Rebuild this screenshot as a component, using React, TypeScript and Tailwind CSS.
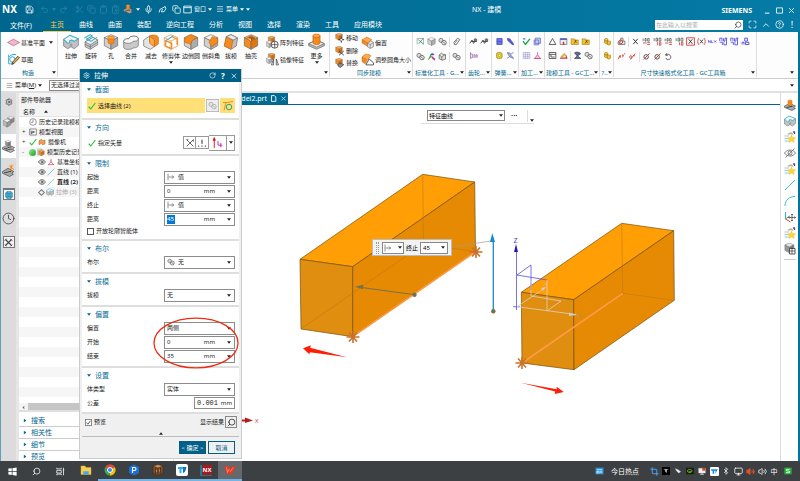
import type { ReactNode } from 'react';
import {
  Bluetooth,
  ChevronUp,
  CircleHelp,
  Clipboard,
  ClipboardCopy,
  Clock,
  Copy,
  Crop,
  Eye,
  Globe,
  Maximize,
  Menu,
  Mic,
  Monitor,
  Redo2,
  RotateCcw,
  Save,
  Scissors,
  Search,
  Settings,
  Undo2,
  Volume2,
  X,
} from 'lucide-react';

/* ---------- small shared pieces ---------- */

function Svg({ children, className = 'size-4', box = '0 0 24 24' }: { children: ReactNode; className?: string; box?: string }) {
  return (
    <svg viewBox={box} className={`${className} shrink-0`} fill="none" stroke="#6a6a6a" strokeWidth="1" strokeLinejoin="round">
      {children}
    </svg>
  );
}

function Caret({ className = 'text-[#222]' }: { className?: string }) {
  return (
    <svg viewBox="0 0 6 4" className={`w-1 h-[3px] shrink-0 ${className}`}>
      <path d="M0 0h6L3 4z" fill="currentColor" />
    </svg>
  );
}

function Cube({ x = 0, y = 0, s = 1, top = '#f4f4f4', left = '#d0d0d0', right = '#acacac' }) {
  return (
    <g transform={`translate(${x} ${y}) scale(${s})`}>
      <path d="M12 1l10 4.500-10 5-10-5z" fill={top} />
      <path d="M2 5.500l10 5V23L2 17.500z" fill={left} />
      <path d="M22 5.500l-10 5V23l10-5.500z" fill={right} />
    </g>
  );
}

const OG = { top: '#ffa94a', left: '#f58a1f', right: '#d96c0a' };

/* ---------- feature icons ---------- */

const FEATURE: Record<string, ReactNode> = {
  extrude: (
    <>
      <path d="M1 8v10l6 4 4-2v-4l2-1v5l4 2 6-5V7l-6 4-4-2-2 1-4 2z" fill="#c2c2c2" />
      <path d="M1 8l9-6 13 5-6 4-4-2-3 1v3l-3 1z" fill="#f3f3f3" stroke="#35b0d3" strokeWidth="1.600" />
    </>
  ),
  revolve: (
    <>
      <path d="M3 12l12-7 7 4v7l-11 7-8-4z" fill="#c8c8c8" />
      <path d="M3 12l8 4 11-7-7-4z" fill="#f1f1f1" />
      <path d="M11 16v7M3 15.500l8 4 11-7" />
      <path d="M2 6l9-5 3 2-9 5 7 3 9-6" stroke="#35b0d3" strokeWidth="1.600" />
    </>
  ),
  hole: (
    <>
      <Cube />
      <path d="M7.500 6v7c1 2.500 8 2.500 9 0V6z" fill="#f58a1f" stroke="#d96c0a" />
      <ellipse cx="12" cy="5.500" rx="5" ry="2.400" fill="#ffa94a" stroke="#d96c0a" />
    </>
  ),
  unite: (
    <>
      <path d="M1 11c0-3 4-4 8-4 0-5 14-5 14 0v10c0 3-5 4-8 4-2 3-14 3-14-1z" fill="#c9c9c9" />
      <path d="M1 11c0-3 4-4 8-4 0-5 14-5 14 0 0 3-4 4-8 4-1 4-14 4-14 0z" fill="#f7f7f7" />
    </>
  ),
  subtract: (
    <>
      <path d="M1 9l9-6v9l7 4v3l-6 4-10-5z" fill="#e4e4e4" />
      <path d="M10 3c4-3 13-1 13 2v10l-6 4V9z" fill="#f58a1f" stroke="#c9650b" />
      <path d="M10 3l7 6v10l-7-5z" fill="#ffa94a" stroke="#c9650b" />
    </>
  ),
  trim: (
    <>
      <path d="M12 1l10 4.500V18L12 23 2 18V5.500zM2 5.500l10 5 10-5M12 10.500V23" stroke="#e08a3a" />
      <path d="M4 10l9 4v8l-9-4zM14 4l7 4v8" stroke="#f58a1f" strokeWidth="1.800" />
      <path d="M4 10l11-7" stroke="#35b0d3" strokeWidth="1.600" />
    </>
  ),
  blend: (
    <>
      <Cube />
      <path d="M2 12c0-4 1-6 5-9l5-2 10 4.500c-6 1-10 5-10 10z" fill="#f58a1f" stroke="#c9650b" />
    </>
  ),
  chamfer: (
    <>
      <Cube />
      <path d="M14 4l8 3v6l-9 6-4-7z" fill="#f58a1f" stroke="#c9650b" />
    </>
  ),
  draft: (
    <>
      <path d="M5 4l7-3 10 5-2 12-8 5-10-5z" fill="#bdbdbd" />
      <path d="M5 4l10 5-3 14-10-5z" fill="#f58a1f" stroke="#c9650b" />
      <path d="M5 4l7-3 10 5-7 3z" fill="#ececec" />
    </>
  ),
  shell: (
    <>
      <Cube left="#f58a1f" right="#e0760f" top="#ffb35c" />
      <path d="M12 3l6 3-6 5-6-5z" fill="#a85a14" stroke="#c9650b" />
      <path d="M6 6l6 5V7z" fill="#ffc078" stroke="none" />
    </>
  ),
  pattern: (
    <>
      <Cube x={3} y={-1} s={0.6} {...OG} />
      <Cube x={-1} y={8} s={0.6} />
      <circle cx="16" cy="16" r="6.500" fill="#fff" stroke="#444" strokeWidth="1.600" />
      <path d="M10 16h12M16 10v12" stroke="#444" strokeWidth="1.400" />
    </>
  ),
  mirror: (
    <>
      <Cube x={3} y={-1} s={0.6} {...OG} />
      <Cube x={-1} y={7} s={0.55} />
      <path d="M10 22l4-11v11zM23 22l-4-11v11z" fill="#fff" stroke="#444" strokeWidth="1.400" />
    </>
  ),
  more: (
    <>
      <path d="M1 15l11-5 11 5v3l-11 5-11-5z" fill="#bbb" />
      <path d="M1 15l11 5 11-5-11-5z" fill="#e8e8e8" />
      <path d="M7 4v10c1 3 9 3 10 0V4z" fill="#f58a1f" stroke="#c9650b" />
      <ellipse cx="12" cy="4" rx="5" ry="2.500" fill="#ffa94a" stroke="#c9650b" />
    </>
  ),
  move: (
    <>
      <Cube x={0} y={-1} s={0.8} {...OG} />
      <path d="M15 9v14M8 16h14" stroke="#333" strokeWidth="2.400" />
      <circle cx="15" cy="16" r="3" fill="#fff" stroke="#333" />
    </>
  ),
  remove: (
    <>
      <Cube x={0} y={-1} s={0.8} {...OG} />
      <path d="M10 12l11 10M21 12L10 22" stroke="#333" strokeWidth="2.200" />
    </>
  ),
  replace: (
    <>
      <Cube x={0} y={-1} s={0.8} {...OG} />
      <path d="M7 15c5-4 10-2 14 1l-8 7-6-4z" fill="#888" stroke="#333" strokeWidth="1.400" />
    </>
  ),
  offset: (
    <>
      <path d="M2 7l9-5 9 5-8 6z" fill="#ffa94a" stroke="#c9650b" />
      <path d="M2 7l10 6v6L2 13z" fill="#f58a1f" stroke="#c9650b" />
      <path d="M12 13l6-4 5 3v8l-6 3-5-3z" fill="#ddd" />
      <path d="M12 13l5 3v7M17 16l6-4" />
    </>
  ),
  resize: (
    <>
      <path d="M2 8c3-7 12-7 16-3l-6 8z" fill="#ffa94a" stroke="#c9650b" />
      <path d="M2 8l9 5-3 7-6-4z" fill="#f58a1f" stroke="#c9650b" />
      <path d="M9 22l6-11 8 7v4z" fill="#fff" stroke="#444" strokeWidth="1.600" />
    </>
  ),
  datum: <path d="M1 12l11-6 11 6-11 6z" fill="#f7b6c9" stroke="#c9718d" strokeWidth="1.600" />,
  sketch: (
    <>
      <path d="M3 3v17M3 20h9" stroke="#27a9cf" strokeWidth="1.600" />
      <path d="M3 8c4-5 8-6 14-5" stroke="#27a9cf" strokeWidth="1.800" />
      <circle cx="10" cy="12" r="5" stroke="#27a9cf" strokeWidth="1.800" />
      <path d="M9 21l2-5L20 6l3 3-10 10z" fill="#f5b342" stroke="#222" strokeWidth="1.400" />
    </>
  ),
  block: <Cube />,
  gears: (
    <>
      <circle cx="8" cy="9" r="5.500" fill="#ddd" stroke="#555" strokeWidth="1.800" />
      <circle cx="16" cy="15" r="6" fill="#eee" stroke="#444" strokeWidth="1.800" />
      <path d="M12 12l8 6" stroke="#444" strokeWidth="1.600" />
    </>
  ),
  check: (
    <>
      <path d="M3 20V4h17v16" stroke="#888" strokeWidth="1.600" />
      <path d="M6 7l14 12M20 3L7 18" stroke="#278b6b" strokeWidth="2.200" />
    </>
  ),
  clip: <path d="M4 15L15 3l6 4-10 14-6-2 9-11" stroke="#555" strokeWidth="2" fill="#eee" />,
  colour: (
    <>
      <path d="M3 21l6-13 4 3z" fill="#43a830" stroke="#43a830" />
      <path d="M9 8c2-5 9-5 10 0z" fill="#3550d2" stroke="#3550d2" />
      <path d="M13 13l8 8" stroke="#d3277e" strokeWidth="4" />
    </>
  ),
  puzzle: <path d="M3 8l6-5 4 3 7 1v12l-8 3-9-4zM3 8l7 4 10-5M10 12v9" fill="#ddd" stroke="#555" strokeWidth="1.800" />,
  gearA: (
    <>
      <path d="M2 17l6-9 4 9 8-10M6 12h15" stroke="#444" strokeWidth="2.400" />
      <circle cx="17" cy="8" r="4" fill="#777" stroke="#444" />
    </>
  ),
  rack: <path d="M4 3v18M4 8h5v10H4M13 18v-8h3v8M19 18v-8h3v8" stroke="#8a5bb5" strokeWidth="1.800" />,
  spring: <path d="M5 4v16h14V4zM5 8h14M5 12h14M5 16h14" fill="#8d92ee" stroke="#3d47c4" strokeWidth="2" />,
  springB: <path d="M4 4l6 1 8 10 2 6-6-3L5 9z" fill="#575fd6" stroke="#2b35b8" strokeWidth="2" />,
  ring: (
    <>
      <rect x="4" y="4" width="15" height="16" rx="5" fill="#e9cd2a" stroke="#a08a10" strokeWidth="2" />
      <circle cx="12" cy="12" r="3" fill="#fff" stroke="#6f6010" />
    </>
  ),
  pin: <path d="M4 4l7 2 3 6 6 8-9-4-5-6zM3 19l7-4M14 7l6-3" fill="#bbb" stroke="#5c68b5" strokeWidth="2" />,
  tick: (
    <>
      <path d="M3 11l6 9L21 5" stroke="#17a84b" strokeWidth="3.600" />
      <path d="M3 5h6" stroke="#3f53c8" strokeWidth="3" />
    </>
  ),
  grid: <path d="M3 4h18v16H3zM3 10h18M3 15h18M9 4v16M15 4v16" fill="#eef" stroke="#9c9cc4" strokeWidth="1.400" />,
  wave: <path d="M6 3h14v14H6zM3 8h12v13H3z" fill="#c8cbf5" stroke="#5a62c0" strokeWidth="1.800" />,
  cone: <path d="M12 3v7M4 20l8-10 8 10zM2 20h20" fill="#f4c3d6" stroke="#d34d83" strokeWidth="2" />,
  tri: <path d="M12 4l9 16H3z" stroke="#333" strokeWidth="2" />,
  panel: (
    <>
      <rect x="3" y="4" width="18" height="16" fill="#ececf7" stroke="#555" strokeWidth="1.600" />
      <path d="M3 6h18" stroke="#5a62c0" strokeWidth="4" />
      <path d="M12 13v8" stroke="#cf3030" strokeWidth="4" />
    </>
  ),
  star: (
    <>
      <path d="M3 5h9l2 3h8v12H3z" fill="#f2c230" stroke="#a07b0c" strokeWidth="1.600" />
      <path d="M13 8l4 8M17 8l-6 9" stroke="#7a4a10" strokeWidth="2.200" />
    </>
  ),
  box: <path d="M3 4h18v16H3zM3 9h18M8 9v7h10" stroke="#333" strokeWidth="2" />,
  angle: (
    <>
      <path d="M3 19h18l-3-8" stroke="#cf3030" strokeWidth="3" />
      <path d="M5 15l9-9 3 3-7 7z" fill="#f2c230" stroke="#8a6b10" />
    </>
  ),
  stamp: <path d="M4 5c5-4 15-2 16 3l-8 5 9 7H4l7-7z" fill="#5d6ba8" stroke="#333" strokeWidth="1.600" />,
  coins: (
    <>
      <path d="M4 6c0-3 9-3 9 0v5h7v8c0 3-9 3-9 0l-7-3z" fill="#f2c230" stroke="#a07b0c" strokeWidth="1.600" />
      <path d="M13 11c-2 2-2 6 0 8M4 9c2 2 7 2 9 0" stroke="#7a5a10" strokeWidth="1.600" />
    </>
  ),
  redgear: (
    <>
      <path d="M10 3h6v8h5v9H3v-7h7z" fill="#eee" stroke="#555" strokeWidth="1.800" />
      <circle cx="10" cy="13" r="5" stroke="#cf3030" strokeWidth="2.600" />
    </>
  ),
  cross: <path d="M6 5l12 14M18 5L6 19" stroke="#222" strokeWidth="2.400" />,
  tolA: (
    <>
      <path d="M3 4v7M8 4h3v7H8zM15 4h4v7h-4z" stroke="#444" strokeWidth="1.800" />
      <path d="M3 16h9M14 15h7M14 20h7" stroke="#cf3030" strokeWidth="2.200" />
    </>
  ),
  tolB: (
    <>
      <path d="M3 3v8M8 3h4v8H8zM16 3h5v8h-5z" stroke="#444" strokeWidth="1.800" />
      <path d="M12 14v8M17 14h4v8h-4z" stroke="#cf3030" strokeWidth="2" />
    </>
  ),
  boxed: (
    <>
      <rect x="1.500" y="2" width="21" height="20" fill="#f6f6f6" stroke="#cf3030" strokeWidth="2.200" />
      <path d="M7 6l10 12M17 6L7 18" stroke="#222" strokeWidth="2.200" />
    </>
  ),
  paren: (
    <>
      <path d="M5 3c-4 5-4 13 0 18M19 3c4 5 4 13 0 18" stroke="#cf3030" strokeWidth="2.200" />
      <path d="M8 7l8 10M16 7L8 17" stroke="#222" strokeWidth="2.200" />
    </>
  ),
  next: <path d="M1 15V9l5 6V9M9 9v6h4M16 9l6 6M22 9l-6 6" stroke="#4a48d8" strokeWidth="2" />,
  blueA: <path d="M2 3v8M2 3h6v8M12 3v8h4V3h6M2 14h7v7M13 14v7h7M20 3v18" stroke="#4a48d8" strokeWidth="2.200" />,
  blueB: <path d="M10 3h7v8h-7zM3 20v-6h5v6M12 20v-6h9v6z" stroke="#4a48d8" strokeWidth="2.400" />,
  redA: <path d="M3 19l5-10M9 9v6M13 8h4l-2 6M19 5h3" stroke="#cf3030" strokeWidth="2.400" />,
  redB: <path d="M5 11c3-3 7 0 4 4s-5 1-4-4zM7 20L19 4M14 10h5" stroke="#cf3030" strokeWidth="2.200" />,
  noA: (
    <>
      <circle cx="11" cy="13" r="6" stroke="#333" strokeWidth="2.200" />
      <path d="M4 20L20 4" stroke="#cf3030" strokeWidth="2.400" />
    </>
  ),
  back: <path d="M8 3L4 8l6 2M4 8c8-4 15 0 14 7-1 6-11 8-13 1" stroke="#444" strokeWidth="2.200" />,
  history: (
    <>
      <circle cx="12" cy="12" r="10" fill="#fff" stroke="#555" strokeWidth="1.800" />
      <path d="M12 5v8H6" stroke="#555" strokeWidth="1.800" />
    </>
  ),
  view: (
    <>
      <rect x="2" y="3" width="20" height="18" fill="#fff" stroke="#555" strokeWidth="2" />
      <path d="M6 7v10h4M11 9l6 3-6 3z" fill="#777" stroke="#555" strokeWidth="2" />
    </>
  ),
  camera: <path d="M3 8l8-4 3 4 7-2v12l-8 2-3-4-7 4z" fill="#f2a04e" stroke="#a8612a" strokeWidth="1.600" />,
  part: (
    <>
      <rect x="1" y="3" width="14" height="18" fill="#ddd" stroke="#888" />
      <Cube x={3} y={4} s={0.85} {...OG} />
    </>
  ),
  csys: (
    <>
      <path d="M12 2v10L3 21M12 12l9 9M4 20h16" stroke="#d3416f" strokeWidth="2.200" />
      <circle cx="12" cy="11" r="3" fill="#f4c3d6" stroke="#d3416f" />
    </>
  ),
  line: <path d="M2 22L22 2" stroke="#27b2cf" strokeWidth="1.800" />,
  arc: <path d="M2 22C2 10 11 3 22 3" stroke="#27b2cf" strokeWidth="1.800" />,
  assembly: (
    <>
      <path d="M1 14l11-5 11 5-4 3 4 2-7 4-15-6z" fill="#bbb" stroke="#555" strokeWidth="1.400" />
      <Cube x={5} y={0} s={0.5} left="#999" right="#777" />
      <path d="M4 16c5 1 8-4 13-3M7 19c4 0 7-3 11-2" stroke="#333" strokeWidth="1.600" />
    </>
  ),
  assemblyO: (
    <>
      <path d="M1 14l11-5 11 5-4 3 4 2-7 4-15-6z" fill="#aaa" stroke="#555" strokeWidth="1.400" />
      <path d="M8 4v8c1 2 8 2 8 0V4z" fill="#f58a1f" stroke="#c9650b" />
      <ellipse cx="12" cy="4" rx="4" ry="2" fill="#ffa94a" stroke="#c9650b" />
      <path d="M5 17c4 0 8-3 12-2" stroke="#333" strokeWidth="1.800" />
    </>
  ),
  constraint: (
    <>
      <path d="M1 14l10-6 11 6-4 3 3 2-7 4-13-6z" fill="#aaa" stroke="#555" strokeWidth="1.400" />
      <path d="M4 16c4 1 8-3 13-2" stroke="#333" strokeWidth="1.600" />
      <path d="M13 10l8-8M13 3l9 7M17 1v9" stroke="#f58a1f" strokeWidth="1.800" />
    </>
  ),
  blocks: (
    <>
      <Cube x={8} y={0} s={0.65} left="#aaa" right="#888" />
      <Cube x={-1} y={5} s={0.75} left="#bbb" right="#999" />
    </>
  ),
  hide: (
    <>
      <path d="M1 12c5-8 17-8 22 0-5 8-17 8-22 0z" stroke="#666" strokeWidth="1.600" />
      <circle cx="12" cy="12" r="4" stroke="#666" strokeWidth="1.600" />
      <path d="M3 21L21 3" stroke="#666" strokeWidth="1.600" />
    </>
  ),
  showhide: (
    <>
      <path d="M1 10h9M1 15h10M1 20h9" stroke="#7ec8e8" strokeWidth="1.800" />
      <path d="M8 7c2-4 8-4 10 0" fill="#e9bd94" stroke="#c09060" strokeWidth="2" />
      <path d="M18 2h3v4" stroke="#4449b0" strokeWidth="2.600" />
      <path d="M15 8l2 5 6 1-4 4 1 5-5-3-5 3 1-5-4-4 6-1z" fill="#fbd53c" stroke="#ecc030" />
    </>
  ),
  wcs: (
    <>
      <path d="M3 2v14" stroke="#27b2cf" strokeWidth="2" />
      <path d="M3 16l10 6" stroke="#d33" strokeWidth="2" />
      <path d="M3 16l8-6" stroke="#3a3" strokeWidth="1.800" />
      <path d="M16 6v14M9 13h14M14 8l2-2 2 2M14 18l2 2 2-2M11 11l-2 2 2 2M21 11l2 2-2 2" stroke="#333" strokeWidth="1.400" />
    </>
  ),
  export: (
    <>
      <Cube x={0} y={-1} s={0.9} left="#999" right="#777" top="#e4e4e4" />
      <rect x="11" y="11" width="11" height="11" fill="#fff" stroke="#333" strokeWidth="1.600" />
      <path d="M11 16h11M16 11v11" stroke="#333" strokeWidth="1.400" />
    </>
  ),
  tools: (
    <>
      <path d="M4 4l16 16M20 4L4 20" stroke="#444" strokeWidth="3" />
      <path d="M2 7l5-5M17 2l5 5M2 18l4 4M18 22l4-4" stroke="#444" strokeWidth="2.600" />
    </>
  ),
};

function Icon({ name, className = 'size-[10px]' }: { name: string; className?: string }) {
  return <Svg className={className}>{FEATURE[name]}</Svg>;
}

/* ---------- title bar and tabs ---------- */

const TABS = ['主页', '曲线', '曲面', '装配', '逆向工程', '分析', '视图', '选择', '渲染', '工具', '应用模块'];

function Header() {
  return (
    <header className="h-8 shrink-0 bg-gradient-to-r from-[#00668e] to-[#057ba5] text-white">
      <div className="h-[18px] flex items-center relative">
        <span className="w-[25px] pl-[2px] text-[10px] font-bold">NX</span>
        <div className="flex items-center gap-[3px]">
          <Save className="size-[9px]" />
          <span className="flex items-center gap-[3px] pl-[3px] text-[#2f86a8]">
            <Undo2 className="size-[9px]" />
            <Caret className="text-[#2f86a8]" />
            <Redo2 className="size-[9px]" />
          </span>
          <span className="flex items-center gap-[3px] pl-1 text-[#2f86a8]">
            <Scissors className="size-[9px]" />
            <Copy className="size-[9px]" />
            <Clipboard className="size-[9px]" />
            <ClipboardCopy className="size-[9px]" />
          </span>
          <Icon name="assemblyO" className="size-[10px]" />
          <Caret className="text-white" />
        </div>
        <div className="flex items-center gap-[5px] pl-1">
          <Mic className="size-[9px]" />
          <Svg className="size-[9px]">
            <path d="M3 20l2-8L19 4l2 6-5 8H9l3-7" stroke="#fff" strokeWidth="2.200" />
          </Svg>
          <Copy className="size-[9px]" />
        </div>
        <div className="flex items-center gap-[2px] pl-[2px] text-[6px]">
          <Svg className="size-[9px]">
            <path d="M2 3h20v18H2zM2 7h20" stroke="#fff" strokeWidth="2.200" />
          </Svg>
          <span>窗口</span>
          <Caret className="text-white" />
          <Menu className="size-[8px] ml-[2px]" />
          <span>菜单</span>
          <Caret className="text-white" />
          <Caret className="text-white" />
        </div>
        <span className="absolute left-[59%] top-[6px] text-[7px]">NX - 建模</span>
        <div className="ml-auto flex items-center gap-[3px] pr-1 pt-[2px]">
          <span className="text-[7px] font-bold pr-2">SIEMENS</span>
          <Svg className="size-[9px]"><path d="M5 19h12" stroke="#fff" strokeWidth="2.600" /></Svg>
          <Svg className="size-[9px]"><path d="M4 5h16v14H4z" stroke="#fff" strokeWidth="2.200" /></Svg>
          <X className="size-[9px]" />
        </div>
      </div>
      <div className="h-[14px] flex items-center text-[7px] whitespace-nowrap">
        <button className="w-[43px] pl-[10px] text-left">文件(F)</button>
        <nav className="flex gap-px h-full">
          {TABS.map((tab, i) => (
            <button
              key={tab}
              className={i === 0 ? 'px-[7px] text-[#f5cf4c] border-b border-[#f5cf4c]' : 'px-[7px] border-b border-transparent'}
            >
              {tab}
            </button>
          ))}
        </nav>
        <div className="ml-auto flex items-center gap-1 pr-1 pb-px">
          <label className="flex items-center w-[88px] h-[10px] bg-white px-px text-[#333]">
            <input aria-label="搜索" placeholder="在此输入以搜索" className="flex-1 min-w-0 text-[6px] placeholder:text-[#aaa] outline-none" />
            <Search className="size-2 -scale-x-100" />
          </label>
          <Maximize className="size-[9px] ml-[1px]" />
          <ChevronUp className="size-[10px]" />
          <CircleHelp className="size-[9px]" />
          <span className="w-2 text-center text-[9px]">!</span>
        </div>
      </div>
    </header>
  );
}

/* ---------- ribbon ---------- */

const FEATURES = [
  ['extrude', '拉伸'],
  ['revolve', '旋转'],
  ['hole', '孔'],
  ['unite', '合并'],
  ['subtract', '减去'],
  ['trim', '修剪体'],
  ['blend', '边倒圆'],
  ['chamfer', '倒斜角'],
  ['draft', '拔模'],
  ['shell', '抽壳'],
];

const GC_GROUPS = [
  { label: '标准化工具 - G...', width: 'w-[53px]', rows: [['check', 'block', 'gears', '|', 'clip'], ['gears', 'colour', 'puzzle', '|', 'gears']] },
  { label: '齿轮...', width: 'w-[26px]', rows: [['gearA', 'gearA'], ['rack']] },
  { label: '弹簧...', width: 'w-[27px]', rows: [['spring', 'springB'], ['ring', 'pin']] },
  { label: '加工...', width: 'w-[26px]', rows: [['tick', 'wave'], ['grid', 'cone']] },
  { label: '建模工具 - GC工...', width: 'w-[55px]', rows: [['tri', 'panel', 'star', 'star'], ['box', 'angle', '|', 'stamp', 'gears']] },
  { label: '?..', width: 'w-[14px]', rows: [['coins'], ['coins']] },
  {
    label: '尺寸快速格式化工具 - GC工具箱',
    width: 'w-[143px]',
    rows: [
      ['redgear', '|', 'cross', 'tolA', 'tolB', 'tolA', 'tolB', 'boxed', 'paren', 'next', 'blueA', 'blueA', 'blueB'],
      ['redA', 'redB', '|', 'noA', 'noA', 'back'],
    ],
  },
];

function Group({ width, label, children }: { width: string; label: string; children: ReactNode }) {
  return (
    <section className={`${width} shrink-0 h-[45px] flex flex-col border-r border-[#ddd]`}>
      <div className="h-[36px] flex">{children}</div>
      <div className="h-[9px] flex items-center px-px text-[6px] text-[#00668e] whitespace-nowrap">
        <span className="flex-1 text-center">{label}</span>
        <Caret />
      </div>
    </section>
  );
}

function SideButton({ icon, text, caret }: { icon: string; text: string; caret?: boolean }) {
  return (
    <button className="flex items-center gap-px whitespace-nowrap">
      <Icon name={icon} className="size-[13px]" />
      {text}
      {caret && <Caret className="ml-[3px] text-[#222]" />}
    </button>
  );
}

function Ribbon() {
  return (
    <div className="h-[47px] shrink-0 flex bg-[#fdfdfd] border-b border-[#ccc] text-[6px] pl-[2px] text-[#222]">
      <Group width="w-[55px]" label="构造">
        <div className="flex flex-col justify-between pl-1 pt-[4px] pb-[2px]">
          <SideButton icon="datum" text="基准平面" caret />
          <SideButton icon="sketch" text="草图" />
        </div>
      </Group>
      <Group width="w-[272px]" label="">
        <div className="flex pl-[3px]">
          {FEATURES.map(([icon, text]) => (
            <button key={text} className="w-5 pt-[2px] flex flex-col items-center whitespace-nowrap">
              <Icon name={icon} className="size-4" />
              <span className="pt-[3px]">{text}</span>
              {icon === 'trim' && <Caret className="mt-[2px] text-[#222]" />}
            </button>
          ))}
        </div>
        <div className="flex flex-col justify-between pl-[5px] pt-[4px] pb-[2px]">
          <SideButton icon="pattern" text="阵列特征" />
          <SideButton icon="mirror" text="镜像特征" />
        </div>
        <button className="pl-1 pt-px flex flex-col items-center whitespace-nowrap">
          <Icon name="more" className="size-[17px]" />
          <span className="pt-[3px]">更多</span>
          <Caret className="mt-[2px] text-[#222]" />
        </button>
      </Group>
      <Group width="w-[83px]" label="同步建模">
        <div className="flex flex-col justify-between pl-[5px] pt-px whitespace-nowrap">
          {[['move', '移动'], ['remove', '删除'], ['replace', '替换']].map(([icon, text]) => (
            <button key={icon} className="flex items-center gap-px">
              <Icon name={icon} />
              {text}
            </button>
          ))}
        </div>
        <div className="flex flex-col justify-between items-start pl-[3px] pt-[4px] pb-[2px]">
          <SideButton icon="offset" text="偏置" />
          <SideButton icon="resize" text="调整圆角大小" />
        </div>
      </Group>
      {GC_GROUPS.map(group => (
        <Group key={group.label} width={group.width} label={group.label}>
          <div className="flex flex-col gap-[5px] pl-[3px] pt-[5px]">
            {group.rows.map((row, r) => (
              <div key={r} className="flex gap-[2px]">
                {row.map((name, i) =>
                  name === '|' ? (
                    <span key={i} className="w-px h-[10px] bg-[#ddd]" />
                  ) : (
                    <Icon key={i} name={name} className="size-[9px]" />
                  ),
                )}
              </div>
            ))}
          </div>
        </Group>
      ))}
      <div className="flex-1 flex justify-end items-end pb-1 pr-1">
        <Caret />
      </div>
    </div>
  );
}

function SelectionBar() {
  return (
    <div className="h-[14px] shrink-0 flex items-center bg-white border-b-2 border-[#e0e0e0] pl-[5px] pr-1 text-[6px] text-[#222]">
      <button className="flex items-center gap-[2px] whitespace-nowrap">
        <Menu className="size-[7px] text-[#777]" />
        <span>菜单(<u>M</u>)</span>
        <Caret />
      </button>
      <select aria-label="选择过滤器" className="ml-[7px] w-[90px] h-[11px] border border-[#888] appearance-none pl-px leading-none">
        <option>无选择过滤器</option>
      </select>
      <Caret className="ml-auto text-[#222]" />
    </div>
  );
}

/* ---------- resource bar and part navigator ---------- */

function ResourceBar() {
  return (
    <aside className="w-[15px] shrink-0 bg-[#dcdcdc] flex flex-col text-[#333]">
      <button className="h-[17px] grid place-items-center" aria-label="设置"><Settings className="size-[8px]" /></button>
      <button className="h-6 grid place-items-center" aria-label="装配"><Icon name="blocks" className="size-3" /></button>
      <button className="h-6 grid place-items-center bg-white" aria-label="部件导航器"><Icon name="assembly" className="size-[13px]" /></button>
      <button className="h-6 grid place-items-center" aria-label="约束"><Icon name="constraint" className="size-[13px]" /></button>
      <button className="h-6 grid place-items-center" aria-label="网页">
        <span className="size-3 bg-white border border-t-2 border-[#777] grid place-items-center">
          <span className="size-2 rounded-full bg-[#087ca8] grid place-items-center">
            <Globe className="size-2 text-[#9fd4e6]" strokeWidth={1.6} />
          </span>
        </span>
      </button>
      <button className="h-6 grid place-items-center" aria-label="历史"><Clock className="size-[13px]" strokeWidth={1.4} /></button>
      <button className="h-6 grid place-items-center" aria-label="加工">
        <span className="size-3 bg-[#f3f3f3] border border-[#777] grid place-items-center">
          <Icon name="tools" className="size-[9px]" />
        </span>
      </button>
    </aside>
  );
}

const Ball = () => <span className="size-[7px] rounded-full bg-gradient-to-br from-[#8df08d] to-[#0c9a1c] shrink-0" />;

const GreenTick = () => (
  <Svg className="size-[8px]">
    <path d="M2 14l6 7L22 3" stroke="#1fc034" strokeWidth="3.400" />
  </Svg>
);

const TREE = [
  { text: '历史记录建模模式', icon: 'history', mark: '' },
  { text: '模型视图', icon: 'view', mark: '+' },
  { text: '摄像机', icon: 'camera', mark: '+', pre: <GreenTick /> },
  { text: '模型历史记录', icon: 'part', mark: '-', pre: <Ball /> },
  { text: '基准坐标系 (0)', icon: 'csys', deep: true, pre: <Eye className="size-[8px]" /> },
  { text: '直线 (1)', icon: 'line', deep: true, pre: <Eye className="size-[8px]" /> },
  { text: '直线 (2)', icon: 'line', deep: true, bold: true, pre: <Eye className="size-[8px]" /> },
  { text: '拉伸 (3)', icon: 'extrude', deep: true, faded: true, pre: <span className="size-[5px] mx-px rotate-45 border border-[#777] shrink-0" /> },
];

function Navigator() {
  return (
    <aside className="w-[158px] shrink-0 flex flex-col bg-white border-l-[3px] border-r border-[#e6e6e6] text-[6px] text-[#222]">
      <h2 className="h-[14px] shrink-0 flex items-center pl-[2px] bg-[#f4f4f4]">部件导航器</h2>
      <div className="h-[10px] shrink-0 flex items-center gap-[9px] pl-1 bg-[#f4f4f4] border-b border-[#e4e4e4]">
        名称 <Caret className="rotate-180 text-[#222]" />
      </div>
      <ul className="flex-1 overflow-hidden bg-[repeating-linear-gradient(#fff_0px,#fff_10px,#f6f6f6_10px,#f6f6f6_20px)]">
        {TREE.map(row => (
          <li
            key={row.text}
            className={`h-[10px] flex items-center gap-px whitespace-nowrap ${row.deep ? 'pl-[19px]' : 'pl-[3px]'} ${row.bold ? 'font-bold' : ''} ${row.faded ? 'text-[#aaa]' : ''}`}
          >
            {!row.deep && <span className="w-[6px] text-[#333]">{row.mark}</span>}
            {row.pre}
            <Icon name={row.icon} className="size-[8px]" />
            <span className="pl-px">{row.text}</span>
          </li>
        ))}
      </ul>
      <div className="h-[7px] shrink-0 flex items-center bg-[#f4f4f4]">
        <span className="w-[9px] text-center font-bold">‹</span>
        <span className="flex-1 h-full bg-[#c6c6c6]" />
      </div>
      <div className="shrink-0 h-[51px] overflow-hidden pt-[3px] border-t-2 border-[#e0e0e0]">
        {['搜索', '相关性', '细节', '预览'].map(text => (
          <button key={text} className="w-full h-3 flex items-center gap-1 pl-1 border-b border-[#ccc] text-[7px] text-[#00668e]">
            <Caret className="-rotate-90 text-[#00668e]" />
            {text}
          </button>
        ))}
      </div>
    </aside>
  );
}

/* ---------- model canvas ---------- */

function Burst({ x, y }: { x: number; y: number }) {
  return (
    <path
      transform={`translate(${x} ${y})`}
      d="M-6.500 0h13M0-6v12M-4-4.500l8 9M4-4.500l-8 9"
      stroke="#c9722c"
      strokeWidth="1.600"
    />
  );
}

function Scene() {
  return (
    <svg viewBox="174 105 606 356" preserveAspectRatio="xMinYMin meet" className="absolute inset-0 w-full h-full" fill="none" strokeLinejoin="round">
      {/* left solid */}
      <g stroke="#75500f" strokeWidth=".7">
        <path d="M300 259.300L422.700 174.300 474.700 182 352.700 266.700z" fill="#ff9e05" />
        <path d="M300 259.300L352.700 266.700V336.700L301 329z" fill="#e08e10" />
        <path d="M352.700 266.700L474.700 182 475.500 251.700 352.700 336.700z" fill="#e68a03" />
      </g>
      <path d="M422.700 174.300L423.500 244 475.500 251.700M301 329L423.500 244" stroke="#b87510" strokeWidth=".5" />
      <path d="M352.700 336.700L475.500 251.700" stroke="#ff9a48" strokeWidth="1.600" />
      <path d="M414.500 294.700L358 287" stroke="#77724c" />
      <path d="M355 286.700l8-2v4.500z" fill="#77724c" />
      <circle cx="414.500" cy="294.700" r="2.200" fill="#77704a" />
      <path d="M440 248.500L491 241" stroke="#a59b82" strokeWidth=".7" />
      <Burst x={353} y={337} />
      <Burst x={476} y={252} />
      {/* limit handle */}
      <path d="M493.300 311V240" stroke="#168ad0" strokeWidth="1.300" />
      <path d="M492.300 233l2.700 9h-5z" fill="#168ad0" />
      <circle cx="493.300" cy="311.300" r="2.200" fill="#77704a" />
      {/* right solid */}
      <g stroke="#75500f" strokeWidth=".7">
        <path d="M521.300 292.300L621.700 223.300 673.700 230.700 573.700 299.700z" fill="#ff9e05" />
        <path d="M521.300 292.300L573.700 299.700 574 369.700 522 363z" fill="#e08e10" />
        <path d="M573.700 299.700L673.700 230.700 674.300 300.300 574 369.700z" fill="#e68a03" />
      </g>
      <path d="M621.700 223.300L622.700 293.300 674.300 300.300" stroke="#b87510" strokeWidth=".5" />
      <path d="M522 363L622.700 293.300" stroke="#ff9a48" strokeWidth="1.600" />
      <Burst x={522} y={363} />
      {/* datum csys */}
      <path d="M516.500 310V250M513 306.700h7M517 275L531 265V290M517 275L547 280" stroke="#5451e0" strokeWidth=".8" />
      <path d="M516 244l2 8h-4z" fill="#2018b8" />
      <path d="M517 306.700L545 288M517 306.700L576 314.500M531 280V296L561 301 547 311V280" stroke="#ddd0c4" strokeWidth=".8" />
      <path d="M546 287l-5 1 2 3zM577 315l-8-2.500v3.500z" fill="#ccc" />
      <text x="513.500" y="243" fontSize="7" fill="#3a38e0">Z</text>
      <text x="545" y="287" fontSize="6" fill="#c8c0c8">Y</text>
      <text x="577.500" y="317.500" fontSize="6" fill="#999">X</text>
      {/* view triad */}
      <path d="M240 419.500h5v-2l8 3-8 2.500v-1.500h-5z" fill="#b81c1c" />
      <text x="255" y="423" fontSize="6" fill="#d84040">X</text>
      {/* direction marks */}
      <path d="M303 348.300l8-3-1 2.500 37 9.500-37-5-.7 2z" fill="#ff1e05" />
      <path d="M520.700 382.700l36 6.500v-2.500l7 5.300-9 2 .5-2.500z" fill="#ff1e05" />
    </svg>
  );
}

const LimitIcon = () => (
  <Svg className="size-[8px]">
    <path d="M3 2v20M5 12h15M15 7l5 5-5 5" stroke="#555" strokeWidth="2" />
  </Svg>
);

function Canvas() {
  return (
    <main className="flex-1 min-w-0 flex flex-col">
      <div className="h-3 shrink-0 flex border-b border-[#00668e]">
        <button className="w-[114px] bg-[#006a92] text-white text-[7px] flex items-center justify-end gap-[3px] pr-px">
          model2.prt
          <Svg className="size-[7px]"><path d="M5 2h10l5 5v15H5z" stroke="#fff" strokeWidth="3" /></Svg>
          <X className="size-[7px]" />
        </button>
      </div>
      <div className="relative flex-1 min-h-0 bg-white">
        <Scene />
        <div className="absolute left-[247px] top-0 w-[113px] h-[19px] flex items-center gap-[6px] pl-[6px] pt-[3px] border-b border-[#ddd] bg-white text-[6px]">
          <div className="relative w-[78px] flex items-center">
            <select aria-label="曲线规则" className="w-full h-[11px] appearance-none border border-[#888] pl-px leading-none">
              <option>特征曲线</option>
            </select>
            <Caret className="absolute right-[2px] text-[#222]" />
          </div>
          <span className="text-[8px] leading-none">···</span>
          <span className="ml-auto h-3 border-l border-[#ddd] flex items-end pl-[2px]"><Caret /></span>
        </div>
        <div className="absolute left-[198px] top-[134px] w-[80px] h-[17px] flex items-center gap-[2px] px-[3px] border border-[#bbb] bg-[#f2f2f2] text-[6px]">
          <span className="w-[3px] h-3 border-x border-dotted border-[#999]" />
          <button className="w-[22px] h-3 ml-px border border-[#888] bg-white flex items-center justify-between px-px" aria-label="限制类型">
            <LimitIcon />
            <Caret />
          </button>
          <label htmlFor="limit" className="whitespace-nowrap">终止</label>
          <span className="flex-1 min-w-0 h-3 border border-[#888] bg-white flex items-center px-[2px]">
            <input id="limit" defaultValue="45" className="flex-1 min-w-0 outline-none" />
            <Caret />
          </span>
        </div>
      </div>
    </main>
  );
}

const RIGHT_TOOLS = ['assemblyO', 'extrude', 'showhide', 'hide', 'showhide', 'line', 'arc', 'wcs', 'showhide', 'export'];

function RightBar() {
  return (
    <aside className="w-[18px] shrink-0 flex flex-col items-center pt-1 border-l border-[#ddd] bg-white">
      {RIGHT_TOOLS.map((name, i) => (
        <button key={i} className="h-4 grid place-items-center">
          <Icon name={name} className="size-3" />
        </button>
      ))}
      <span className="w-3 h-px mt-[2px] bg-[#ccc]" />
    </aside>
  );
}

/* ---------- extrude dialog ---------- */

function Section({ title, children }: { title: string; children: ReactNode }) {
  return (
    <section className="bg-white pl-[5px] pr-1 pb-[3px] border-b-2 border-[#dedede]">
      <h3 className="h-[14px] flex items-center gap-[4px] text-[7px] text-[#087099]">
        <Caret className="text-[#00668e]" />
        {title}
      </h3>
      {children}
    </section>
  );
}

function SelectRow({ id, label, value, icon }: { id: string; label: string; value: string; icon?: ReactNode }) {
  return (
    <div className="h-[14px] flex items-center justify-between">
      <label htmlFor={id}>{label}</label>
      <div className="relative w-[71px] h-[13px] flex items-center gap-[3px] border border-[#8c8c8c] pl-[2px]">
        {icon}
        <select id={id} className="flex-1 min-w-0 h-full appearance-none leading-none outline-none">
          <option>{value}</option>
        </select>
        <Caret className="absolute right-[3px] text-[#222]" />
      </div>
    </div>
  );
}

function ValueRow({ id, label, value, selected }: { id: string; label: string; value: string; selected?: boolean }) {
  return (
    <div className="h-[14px] flex items-center justify-between">
      <label htmlFor={id}>{label}</label>
      <div className="w-[71px] h-[13px] flex items-center border border-[#8c8c8c] px-[2px] pr-[3px]">
        <input
          id={id}
          defaultValue={value}
          className={selected ? 'w-2 h-[9px] bg-[#0078d7] text-white outline-none' : 'w-5 outline-none'}
        />
        <span className="ml-auto mr-3">mm</span>
        <Caret />
      </div>
    </div>
  );
}

function ExtrudeDialog() {
  return (
    <div role="dialog" aria-label="拉伸" className="absolute left-[79px] top-[69px] w-[163px] bg-[#f0f0f0] border border-t-0 border-[#ccc] text-[6px] text-[#222]">
      <div className="h-[13px] flex items-center bg-[#005f87] text-white pl-[3px] pr-[3px]">
        <Settings className="size-[7px]" />
        <span className="pl-1 text-[7px]">拉伸</span>
        <RotateCcw className="size-[7px] ml-auto -scale-x-100" />
        <span className="w-[14px] text-center text-[8px] font-bold">?</span>
        <X className="size-[8px]" />
      </div>
      <div className="px-[2px]">
        <Section title="截面">
          <div className="h-[19px] flex items-center gap-px">
            <button className="flex-1 h-[15px] bg-[#ffdf78] flex items-center gap-[2px] pl-px">
              <GreenTick />
              选择曲线 (2)
            </button>
            <button className="size-[13px] bg-[#eee] border border-[#bbb] grid place-items-center" aria-label="草图截面">
              <Icon name="gears" className="size-[9px] opacity-50" />
            </button>
            <button className="size-[15px] bg-[#ffdf78] grid place-items-center" aria-label="曲线">
              <Svg className="size-3">
                <path d="M4 21L8 4M2 5h10l10-2" stroke="#cf8a1a" strokeWidth="1.600" />
                <circle cx="14" cy="14" r="5.500" stroke="#27a083" strokeWidth="2" />
              </Svg>
            </button>
          </div>
        </Section>
        <Section title="方向">
          <div className="h-[17px] flex items-center">
            <span className="flex-1 flex items-center gap-[2px] pl-px">
              <GreenTick />
              指定矢量
            </span>
            <button className="size-[13px] border border-[#999] grid place-items-center" aria-label="反向">
              <Svg className="size-[10px]"><path d="M4 4l16 16M20 4L4 20M20 4v5M4 4h4" stroke="#333" strokeWidth="1.800" /></Svg>
            </button>
            <button className="size-[13px] border border-l-0 border-[#999] grid place-items-center" aria-label="矢量对话框">
              <Svg className="size-[10px]"><path d="M4 18v3M12 4v10M12 18v3M20 18v3" stroke="#333" strokeWidth="2.400" /></Svg>
            </button>
            <button className="w-[18px] h-[16px] border border-l-0 border-[#999] grid place-items-center" aria-label="矢量">
              <Svg className="size-[13px]">
                <path d="M6 22V5M4 8l2-5 2 5z" stroke="#d32020" strokeWidth="1.800" fill="#d32020" />
                <path d="M13 9v8h8M18 13v8" stroke="#b637b8" strokeWidth="1.800" />
              </Svg>
            </button>
            <button className="w-[8px] h-[16px] border border-l-0 border-[#999] grid place-items-center" aria-label="矢量选项"><Caret /></button>
          </div>
        </Section>
        <Section title="限制">
          <SelectRow id="start" label="起始" value="值" icon={<LimitIcon />} />
          <ValueRow id="start-dist" label="距离" value="0" />
          <SelectRow id="end" label="终止" value="值" icon={<LimitIcon />} />
          <ValueRow id="end-dist" label="距离" value="45" selected />
          <label className="h-[10px] flex items-center gap-[2px]">
            <input type="checkbox" className="size-[7px] appearance-none border border-[#555] bg-white" />
            开放轮廓智能体
          </label>
        </Section>
        <Section title="布尔">
          <SelectRow id="bool" label="布尔" value="无" icon={<Icon name="gears" className="size-[8px]" />} />
        </Section>
        <Section title="拔模">
          <SelectRow id="draft" label="拔模" value="无" />
        </Section>
        <div className="relative">
          <Section title="偏置">
            <SelectRow id="offset" label="偏置" value="两侧" />
            <ValueRow id="offset-start" label="开始" value="0" />
            <ValueRow id="offset-end" label="结束" value="35" />
          </Section>
          <svg viewBox="0 0 88 53" className="absolute right-0 top-[10px] w-[86px] h-[52px] pointer-events-none" fill="none">
            <ellipse cx="44" cy="26.500" rx="43" ry="25.500" stroke="#ef2b12" strokeWidth="1.300" />
          </svg>
        </div>
        <Section title="设置">
          <SelectRow id="body" label="体类型" value="实体" />
          <div className="h-[13px] flex items-center justify-between">
            <label htmlFor="tol">公差</label>
            <span className="w-[41px] h-3 flex items-center border border-[#8c8c8c] px-[2px]">
              <input id="tol" defaultValue="0.001" className="w-[22px] text-[7px] font-['Liberation_Mono',monospace] outline-none" />
              <span className="ml-auto">mm</span>
            </span>
          </div>
        </Section>
        <div className="h-4 flex items-center pl-[3px] pr-[2px]">
          <label className="flex items-center gap-[2px]">
            <input type="checkbox" defaultChecked className="peer sr-only" />
            <Svg className="size-[7px]"><path d="M1 1h22v22H1zM5 12l5 6 9-12" stroke="#444" strokeWidth="2.600" fill="#fff" /></Svg>
            预览
          </label>
          <span className="ml-auto">显示结果</span>
          <button aria-label="显示结果" className="size-3 ml-px border border-[#888] grid place-items-center">
            <Search className="size-[9px] -scale-x-100" />
          </button>
        </div>
        <button aria-label="收起" className="w-full h-[7px] flex items-center justify-center border-b border-[#bbb]">
          <Caret className="rotate-180 text-[#222]" />
        </button>
        <div className="h-[21px] flex items-center justify-end gap-[2px] pr-1">
          <button className="w-[27px] h-[13px] bg-[#006088] text-white whitespace-nowrap">&lt; 确定 &gt;</button>
          <button className="w-[27px] h-[13px] border border-[#006088] text-[#006088]">取消</button>
        </div>
      </div>
    </div>
  );
}

/* ---------- taskbar ---------- */

const APPS: ReactNode[] = [
  <Svg key="files" className="size-3">
    <path d="M2 4h8l2 3h10v14H2z" fill="#f8cf55" stroke="#e0a820" />
    <path d="M7 21v-6h10v6" fill="#49a7e0" stroke="#49a7e0" />
  </Svg>,
  <Svg key="chrome" className="size-3">
    <circle cx="12" cy="12" r="11" fill="#34a853" stroke="none" />
    <path d="M12 12L2.500 6.500a11 11 0 0 1 19 0z" fill="#ea4335" stroke="none" />
    <path d="M12 12l9.500-5.500A11 11 0 0 1 12 23z" fill="#fbbc05" stroke="none" />
    <circle cx="12" cy="12" r="5" fill="#4285f4" stroke="#fff" strokeWidth="2" />
  </Svg>,
  <Svg key="p" className="size-3">
    <path d="M12 1l10 5v12l-10 5-10-5V6z" fill="#1870d8" stroke="none" />
    <path d="M9 18V7h4a3 3 0 0 1 0 6H9" stroke="#fff" strokeWidth="2.200" />
  </Svg>,
  <Svg key="table" className="size-3">
    <path d="M2 4l10-3 10 3v14l-10 5-10-5z" fill="#81502b" stroke="#3a2716" />
    <path d="M2 4l10 4 10-4-10-3z" fill="#c69461" stroke="#3a2716" />
    <path d="M7 7v12M12 8v14M17 7v12" stroke="#3a2716" strokeWidth="1.400" />
    <path d="M9 12v4M15 11v4" stroke="#d0a070" strokeWidth="1.600" />
  </Svg>,
  <Svg key="todesk" className="size-3">
    <rect width="24" height="24" rx="4" fill="#fff" stroke="none" />
    <path d="M4 6h11v4h-4v8H7v-8H4z" fill="#22b5e8" stroke="none" />
    <path d="M14 6h7l-2 7c-1 3-3 5-5 5z" fill="#1769e0" stroke="none" />
  </Svg>,
  <span key="nx" className="w-3 h-[11px] bg-[#a71921] border-l-2 border-b border-[#1d7b83] text-[6px] font-bold grid place-items-center">NX</span>,
  <Svg key="wps" className="size-3">
    <path d="M1 4h10l-2 5h5l-1 3 5-8h6L15 21h-4l1-6-4 6H6z" fill="#f2371f" stroke="none" />
    <path d="M5 7l2 10 4-7M12 16l6-9" stroke="#ffb09c" strokeWidth="1.200" />
  </Svg>,
];

const TRAY: ReactNode[] = [
  <Crop key="crop" className="size-[9px] text-[#4aa2f0]" strokeWidth={2.6} />,
  <Svg key="t1" className="size-2"><path d="M0 0h24v24H0z" fill="#000" stroke="none" /><path d="M5 7h14l-5 3v7l-4-3v-4z" fill="#fff" /></Svg>,
  <Svg key="t2" className="size-2"><path d="M4 5l8 3 8 6-6 4-6-6z" fill="#eee" stroke="#eee" /></Svg>,
  <Svg key="t3" className="size-2"><path d="M0 2h24v20H0z" fill="#18200f" stroke="none" /><path d="M3 12c4-6 12-6 16 0-4 6-12 6-16 0zM9 12a3 3 0 1 0 6 0" stroke="#7fc51e" strokeWidth="2.400" /></Svg>,
  <Svg key="t4" className="size-2"><rect x="2" y="4" width="20" height="14" fill="#eee" stroke="#eee" /><path d="M6 22h12M12 18v4" stroke="#eee" strokeWidth="2" /><path d="M13 3h9v8h-9z" fill="#e43a1e" stroke="none" /></Svg>,
  <Svg key="t5" className="size-[9px]"><rect width="24" height="24" rx="3" fill="#fff" stroke="none" /><path d="M3 6h12v4h-4v8H7v-8H3zM15 6h6l-7 12z" fill="#1b84e8" stroke="none" /></Svg>,
  <Bluetooth key="bt" className="size-[8px]" />,
  <Monitor key="net" className="size-[9px]" />,
  <Volume2 key="v1" className="size-[9px] text-[#e4502c] fill-[#e4502c]" />,
  <Volume2 key="v2" className="size-[9px]" />,
  <span key="ime" className="text-[7px]">中</span>,
];

function Taskbar() {
  return (
    <footer className="h-5 shrink-0 flex items-center bg-[#3d4043] text-white text-[7px]">
      <button className="w-6 grid place-items-center" aria-label="开始">
        <Svg className="size-[9px]"><path d="M1 4l9-1v8H1zM12 3l11-2v10H12zM1 13h9v8l-9-1zM12 13h11v10l-11-2z" fill="#fff" stroke="none" /></Svg>
      </button>
      <button className="w-6 grid place-items-center" aria-label="搜索"><Search className="size-[9px] -scale-x-100" /></button>
      <button className="w-6 grid place-items-center" aria-label="任务视图">
        <Svg className="size-[9px]"><path d="M2 2v3h12V2M2 9h12v7H2zM2 22v-3h12v3M20 2v20M18 8h4" stroke="#fff" strokeWidth="2" /></Svg>
      </button>
      <div className="flex h-full ml-[2px]">
        {APPS.map((app, i) => (
          <button
            key={i}
            className={`w-6 px-px grid place-items-center border-b-2 ${i === 0 ? 'border-transparent' : 'border-[#70b4e8]'} ${i === 6 ? 'bg-[#66696c]' : ''}`}
          >
            {app}
          </button>
        ))}
      </div>
      <div className="ml-auto flex items-center gap-[7px] pr-[9px]">
        <Svg className="w-[9px] h-[8px]">
          <path d="M0 2h24v20H0z" fill="#2a94e0" stroke="none" />
          <path d="M4 8h16M4 13h7v5H4zM14 13h6M14 17h6" stroke="#fff" strokeWidth="2" />
        </Svg>
        <span>今日热点</span>
      </div>
      <div className="flex items-center">
        {TRAY.map((item, i) => (
          <span key={i} className="w-3 grid place-items-center">{item}</span>
        ))}
        <Svg className="size-[8px] ml-1 mr-2">
          <path d="M1 2h22v20H1z" fill="#28b040" stroke="none" />
          <path d="M17 7H9c-3 0-3 4 0 5h6c3 1 3 5 0 5H6" stroke="#fff" strokeWidth="2.400" />
        </Svg>
      </div>
    </footer>
  );
}

export default function App() {
  return (
    <div className="relative h-screen flex flex-col overflow-hidden bg-white leading-none font-['Noto_Sans','Noto_Sans_CJK_SC',sans-serif]">
      <Header />
      <div className="flex-1 min-h-0 flex flex-col border-l border-r-2 border-l-[#5f9fbb] border-r-[#00749d]">
        <Ribbon />
        <SelectionBar />
        <div className="flex-1 min-h-0 flex">
          <ResourceBar />
          <Navigator />
          <Canvas />
          <RightBar />
        </div>
      </div>
      <ExtrudeDialog />
      <Taskbar />
    </div>
  );
}
